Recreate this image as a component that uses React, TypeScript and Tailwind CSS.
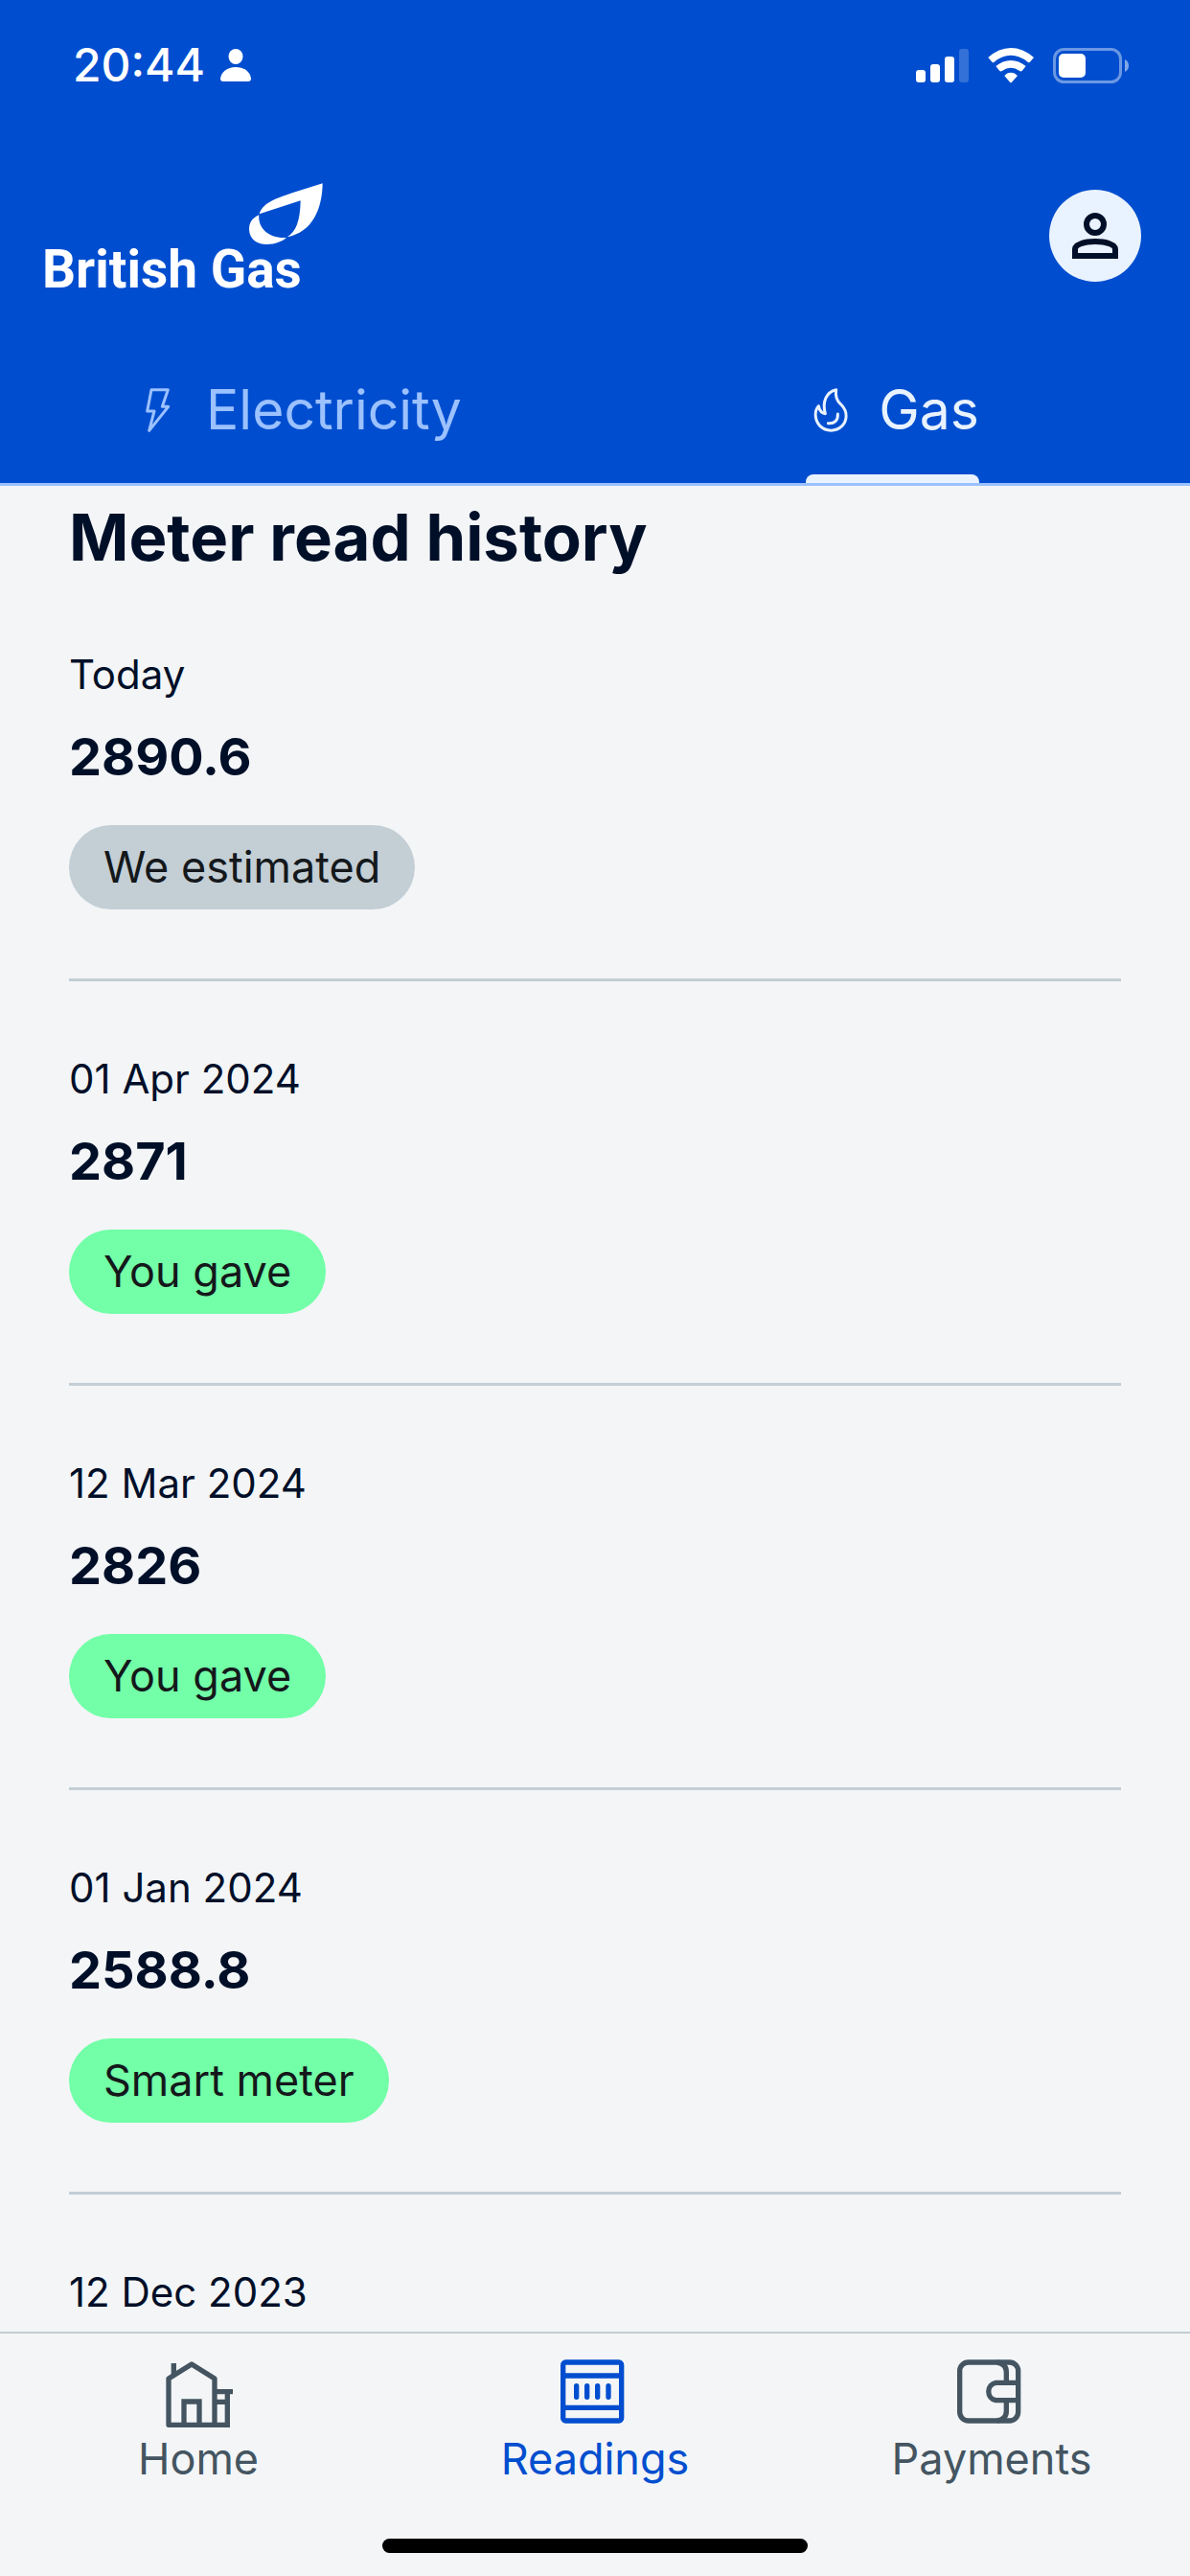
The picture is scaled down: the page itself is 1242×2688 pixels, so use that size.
import type { ReactNode } from "react";
import clsx from "clsx";

interface Reading {
  date: string;
  value?: string;
  source?: "We estimated" | "You gave" | "Smart meter";
}

const readings: Reading[] = [
  { date: "Today", value: "2890.6", source: "We estimated" },
  { date: "01 Apr 2024", value: "2871", source: "You gave" },
  { date: "12 Mar 2024", value: "2826", source: "You gave" },
  { date: "01 Jan 2024", value: "2588.8", source: "Smart meter" },
  { date: "12 Dec 2023" },
];

function StatusBar() {
  return (
    <div className="flex h-[136px] items-center justify-between pr-16 pl-[76px] text-white">
      <div className="flex items-center gap-4">
        <span className="text-[48px] leading-none font-medium">20:44</span>
        <svg viewBox="0 0 32 34" className="h-[34px] w-8" fill="currentColor" aria-hidden="true">
          <ellipse cx="16" cy="8" rx="7.5" ry="8" />
          <path d="M3 34C1 34 0 33 0 31C1 24 7 19 16 19S31 24 32 31C32 33 31 34 29 34Z" />
        </svg>
      </div>

      <div className="flex items-center gap-5">
        {/* Mobile signal, three bars out of four */}
        <svg viewBox="0 0 55 37" className="h-[37px] w-[55px]" fill="currentColor" aria-hidden="true">
          <rect x="0" y="23" width="10" height="13" rx="3" />
          <rect x="15" y="17" width="10" height="19" rx="3" />
          <rect x="30" y="9" width="10" height="27" rx="3" />
          <rect x="45" y="1" width="10" height="35" rx="3" opacity="0.2" />
        </svg>
        {/* Wi-Fi */}
        <svg viewBox="304 87 144 111" className="h-[37px] w-12" fill="currentColor" aria-hidden="true">
          <path d="M305 117Q338 87 376 87T448 117L435 132Q431 134 427 130Q404 110 376 110T326 130Q322 134 318 132Z" />
          <path d="M329 144Q351 126 376 126T423 144L411 159Q407 162 402 158Q391 149 376 149T350 158Q345 162 341 159Z" />
          <path d="M356 174Q364 164 376 164T397 174L379 194Q376 197 373 194Z" />
        </svg>
        {/* Battery */}
        <svg viewBox="0 0 79 37" className="h-[37px] w-[79px]" fill="currentColor" aria-hidden="true">
          <rect x="1.5" y="1.5" width="69" height="34" rx="10" fill="none" stroke="currentColor" strokeWidth="3" opacity="0.42" />
          <rect x="6" y="6" width="28" height="25" rx="5" />
          <path d="M75 12Q79 14 79 18.500T75 25Z" opacity="0.5" />
        </svg>
      </div>
    </div>
  );
}

function Logo() {
  return (
    <a href="#" className="flex w-[293px] flex-col text-white">
      <svg viewBox="688 62 231 192" className="h-16 w-[77px] self-end" fill="currentColor" aria-hidden="true">
        <path d="M720 159C735 118 772 109 918 63C917 145 885 217 807 231C835 215 848 180 849 117Z" />
        <path d="M719 162C698 171 688 187 688 207C689 238 712 254 743 254C770 254 793 244 805 233C752 237 715 205 719 162Z" />
      </svg>
      <span className="font-[Roboto,sans-serif] text-[55px] leading-[52px] font-bold whitespace-nowrap">
        British Gas
      </span>
    </a>
  );
}

interface FuelTabProps {
  label: string;
  active?: boolean;
  icon: ReactNode;
}

function FuelTab({ label, active, icon }: FuelTabProps) {
  return (
    <button
      type="button"
      role="tab"
      aria-selected={Boolean(active)}
      className={clsx(
        "flex flex-1 justify-center text-[57px] font-normal",
        active ? "text-[#e9f2ff]" : "text-[#9bc1ff]",
      )}
    >
      <span className="relative flex h-full items-center gap-6">
        {icon}
        {label}
        {active && <span className="absolute inset-x-0 bottom-0 h-[9px] rounded-t-lg bg-[#e9f2ff]" />}
      </span>
    </button>
  );
}

function Header() {
  return (
    <header className="border-b-3 border-[#9bc1ff] bg-[#004ecf]">
      <StatusBar />

      <div className="flex items-start justify-between pt-[55px] pr-[51px] pl-11">
        <Logo />
        <button type="button" aria-label="Account" className="mt-[7px] size-24 rounded-full bg-[#e9f2ff] text-[#000f28]">
          <svg viewBox="75 54 288 288" fill="none" stroke="currentColor" strokeWidth="18">
            <circle cx="219" cy="162" r="27" />
            <path d="M156 261V240C156 226 184 216 219 216S282 226 282 240V261Z" />
          </svg>
        </button>
      </div>

      <div role="tablist" className="mt-[45px] flex h-[152px]">
        <FuelTab
          label="Electricity"
          icon={
            <svg viewBox="48 66 156 156" className="size-[52px]" fill="none" stroke="currentColor" strokeWidth="9" strokeLinejoin="round" aria-hidden="true">
              <path d="M105 80H157L139 133H158L98 208L114 147H92Z" />
            </svg>
          }
        />
        <FuelTab
          label="Gas"
          active
          icon={
            <svg viewBox="117 66 156 156" className="size-[52px]" fill="none" stroke="currentColor" strokeWidth="9" strokeLinecap="round" strokeLinejoin="round" aria-hidden="true">
              <path d="M212 80C208 105 216 117 228 127C252 152 244 180 230 194C211 212 181 212 162 194C143 174 144 145 157 131C160 145 168 154 178 155C168 118 181 87 212 80Z" />
              <path d="M217 156C219 176 206 187 187 185" />
            </svg>
          }
        />
      </div>
    </header>
  );
}

function ReadingRow({ date, value, source }: Reading) {
  return (
    <li className="flex flex-col items-start border-b-3 border-[#c3ced5] py-[72px] last:border-b-0 last:pb-0">
      <p className="text-[42px] leading-[60px]">{date}</p>
      {value && <p className="mt-4 text-[54px] leading-[80px] font-bold">{value}</p>}
      {source && (
        <span
          className={clsx(
            "mt-[31px] flex h-[88px] items-center rounded-full px-9 text-[45px] text-[#14181b]",
            source === "We estimated" ? "bg-[#c3ced5]" : "bg-[#72ffa7]",
          )}
        >
          {source}
        </span>
      )}
    </li>
  );
}

interface NavItemProps {
  label: string;
  active?: boolean;
  viewBox: string;
  children: ReactNode;
}

function NavItem({ label, active, viewBox, children }: NavItemProps) {
  return (
    <a
      href="#"
      aria-current={active ? "page" : undefined}
      className={clsx("flex flex-1 flex-col items-center", active ? "text-[#004ecf]" : "text-[#445561]")}
    >
      <svg viewBox={viewBox} className="size-20" fill="none" stroke="currentColor" strokeWidth="16" aria-hidden="true">
        {children}
      </svg>
      <span className="text-[45px] leading-[60px]">{label}</span>
    </a>
  );
}

function BottomNav() {
  return (
    <nav className="border-t-2 border-[#c3ced5] pt-[21px] pb-6">
      <div className="flex">
        <NavItem label="Home" viewBox="141 108 240 240">
          <path d="M168 331V186L240 141L312 186V331Z" strokeLinejoin="round" />
          <path d="M184 138V180M216 326V258H264V326M312 227H369M312 259H352M352 227V331H312" />
        </NavItem>
        <NavItem label="Readings" active viewBox="243 108 240 240">
          <rect x="263" y="135" width="183" height="183" rx="8" />
          <path d="M263 177H446M263 277H446" />
          <path d="M305 209V244M338 209V244M371 209V244M405 209V244" strokeLinecap="round" />
        </NavItem>
        <NavItem label="Payments" viewBox="255 108 240 240">
          <rect x="275" y="135" width="183" height="183" rx="27" />
          <path d="M392 135Q421 140 421 165V199M421 254V288Q421 313 392 318" />
          <path d="M458 199H388A28 28 0 0 0 388 254H458" />
        </NavItem>
      </div>
      {/* Home indicator */}
      <div className="mx-auto mt-[53px] h-[15px] w-[444px] rounded-full bg-black" />
    </nav>
  );
}

export default function App() {
  return (
    <div className="flex h-screen flex-col bg-[#f3f5f7] font-[Inter,sans-serif] text-[#000f28]">
      <Header />
      <main className="min-h-0 flex-1 overflow-y-auto px-[72px] pt-[13px] [scrollbar-width:none]">
        <h1 className="text-[67px] leading-[82px] font-bold">Meter read history</h1>
        <ul>
          {readings.map((reading) => (
            <ReadingRow key={reading.date} {...reading} />
          ))}
        </ul>
      </main>
      <BottomNav />
    </div>
  );
}
